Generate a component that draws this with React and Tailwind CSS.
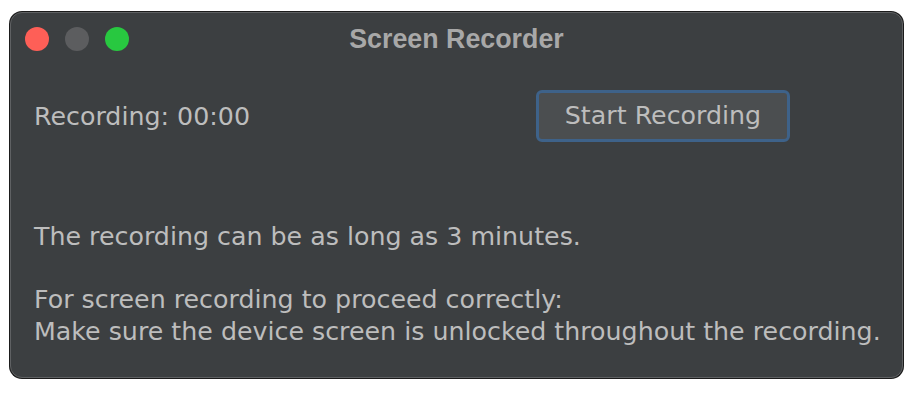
import React from "react";

export default function App() {
  return (
    <div className="w-[916px] h-[400px] bg-white pt-[11px] pl-[9px]">
      <div className="w-[895px] h-[368px] rounded-[13px] bg-[#1b1b1b] p-px">
        <div className="w-full h-full rounded-[12px] bg-[#3c3f41] border border-[#5f6163] flex flex-col" style={{ fontFamily: '"DejaVu Sans", sans-serif' }}>
          <div className="relative h-[52px] flex items-center pl-[14px] gap-[16px]">
            <div className="w-[24px] h-[24px] rounded-full bg-[#fe5f57]" />
            <div className="w-[24px] h-[24px] rounded-full bg-[#5c5d5f]" />
            <div className="w-[24px] h-[24px] rounded-full bg-[#28c840]" />
            <div className="absolute inset-0 flex items-center justify-center text-[26.8px] font-bold text-[#a8a8a8]" style={{ fontFamily: '"Liberation Sans", sans-serif' }}>
              Screen Recorder
            </div>
          </div>
          <div className="flex items-center h-[52px] mt-[25px] pl-[23px] text-[25.3px] text-[#bdbdbd]">
            <span className="w-[502px] pt-[2px]">Recording: 00:00</span>
            <button className="w-[254px] h-[52px] rounded-[6px] border-[3px] border-[#3e6289] bg-[#4b4e50] text-[#bdbdbd] text-[25.3px]">
              Start Recording
            </button>
          </div>
          <div className="pl-[23px] mt-[79px] text-[25.3px] leading-[31px] text-[#bdbdbd]">
            <div>The recording can be as long as 3 minutes.</div>
            <div className="mt-[32px]">For screen recording to proceed correctly:</div>
            <div className="mt-[1px]">Make sure the device screen is unlocked throughout the recording.</div>
          </div>
        </div>
      </div>
    </div>
  );
}
